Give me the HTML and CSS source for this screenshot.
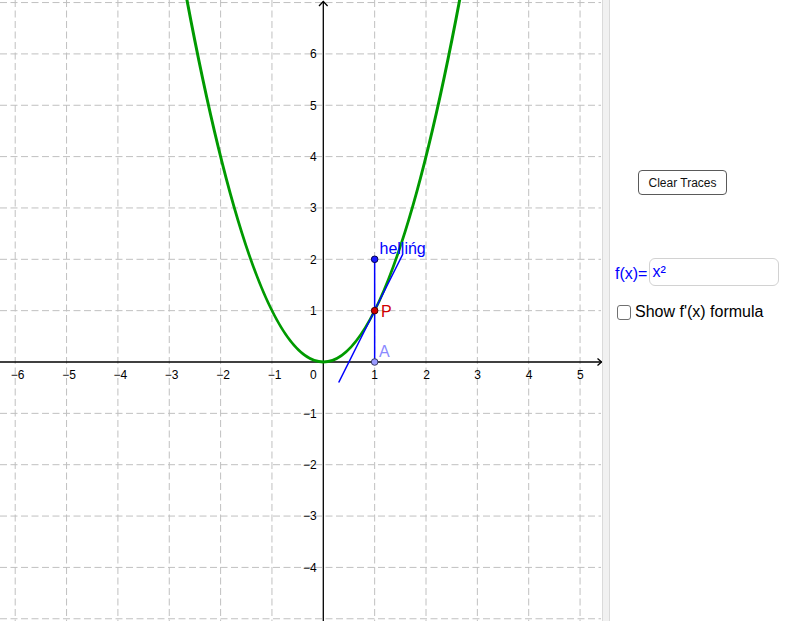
FILE: index.html
```html
<!DOCTYPE html>
<html lang="nl">
<head>
<meta charset="utf-8">
<title>Raaklijn</title>
<link rel="stylesheet" href="styles.css">
</head>
<body>
<div class="app">
  <div class="graph">
    <svg class="plot" width="602" height="621" viewBox="0 0 602 621" xmlns="http://www.w3.org/2000/svg">
      <g class="grid">
        <line x1="15.2" y1="0" x2="15.2" y2="621"/>
        <line x1="66.55" y1="0" x2="66.55" y2="621"/>
        <line x1="117.9" y1="0" x2="117.9" y2="621"/>
        <line x1="169.25" y1="0" x2="169.25" y2="621"/>
        <line x1="220.6" y1="0" x2="220.6" y2="621"/>
        <line x1="271.95" y1="0" x2="271.95" y2="621"/>
        <line x1="374.65" y1="0" x2="374.65" y2="621"/>
        <line x1="426" y1="0" x2="426" y2="621"/>
        <line x1="477.35" y1="0" x2="477.35" y2="621"/>
        <line x1="528.7" y1="0" x2="528.7" y2="621"/>
        <line x1="580.05" y1="0" x2="580.05" y2="621"/>
        <line x1="0" y1="2.55" x2="601" y2="2.55"/>
        <line x1="0" y1="53.9" x2="601" y2="53.9"/>
        <line x1="0" y1="105.25" x2="601" y2="105.25"/>
        <line x1="0" y1="156.6" x2="601" y2="156.6"/>
        <line x1="0" y1="207.95" x2="601" y2="207.95"/>
        <line x1="0" y1="259.3" x2="601" y2="259.3"/>
        <line x1="0" y1="310.65" x2="601" y2="310.65"/>
        <line x1="0" y1="413.35" x2="601" y2="413.35"/>
        <line x1="0" y1="464.7" x2="601" y2="464.7"/>
        <line x1="0" y1="516.05" x2="601" y2="516.05"/>
        <line x1="0" y1="567.4" x2="601" y2="567.4"/>
        <line x1="0" y1="618.75" x2="601" y2="618.75"/>
      </g>
      <g class="axes">
        <line x1="0" y1="362" x2="601.5" y2="362"/>
        <line x1="323.3" y1="621" x2="323.3" y2="1.5"/>
        <polyline points="597.5,358.5 601.5,362 597.5,365.5"/>
        <polyline points="319,6 323.3,1.5 327.6,6"/>
      </g>
      <g class="ticks">
        <text x="17.7" y="378.5" text-anchor="middle">−6</text>
        <text x="69" y="378.5" text-anchor="middle">−5</text>
        <text x="120.4" y="378.5" text-anchor="middle">−4</text>
        <text x="171.7" y="378.5" text-anchor="middle">−3</text>
        <text x="223.1" y="378.5" text-anchor="middle">−2</text>
        <text x="274.5" y="378.5" text-anchor="middle">−1</text>
        <text x="316.6" y="378.5" text-anchor="end">0</text>
        <text x="374.65" y="378.5" text-anchor="middle">1</text>
        <text x="426.5" y="378.5" text-anchor="middle">2</text>
        <text x="477.6" y="378.5" text-anchor="middle">3</text>
        <text x="529" y="378.5" text-anchor="middle">4</text>
        <text x="580.3" y="378.5" text-anchor="middle">5</text>
        <text x="316.6" y="58.2" text-anchor="end">6</text>
        <text x="316.6" y="109.5" text-anchor="end">5</text>
        <text x="316.6" y="160.9" text-anchor="end">4</text>
        <text x="316.6" y="212.2" text-anchor="end">3</text>
        <text x="316.6" y="263.6" text-anchor="end">2</text>
        <text x="316.6" y="314.9" text-anchor="end">1</text>
        <text x="316.6" y="417.6" text-anchor="end">−1</text>
        <text x="316.6" y="469" text-anchor="end">−2</text>
        <text x="316.6" y="520.3" text-anchor="end">−3</text>
        <text x="316.6" y="571.7" text-anchor="end">−4</text>
      </g>
      <path class="curve" d="M184.655,-12.34 Q323.3,736.34 461.945,-12.34"/>
      <line class="tangent" x1="338.7" y1="382.5" x2="402.9" y2="254"/>
      <line class="segment" x1="374.65" y1="259.3" x2="374.65" y2="362"/>
      <circle class="pt-top" cx="374.65" cy="259.3" r="3.3"/>
      <circle class="pt-p" cx="374.65" cy="310.65" r="3.3"/>
      <circle class="pt-a" cx="374.65" cy="362" r="3.3"/>
      <text class="lbl-helling" x="379.5" y="254">hellińg</text>
      <text class="lbl-p" x="381" y="316.5">P</text>
      <text class="lbl-a" x="379" y="356.5">A</text>
    </svg>
  </div>
  <div class="divider"></div>
  <div class="panel">
    <button class="btn" type="button">Clear Traces</button>
    <div class="fx-row">
      <span class="fx-label">f(x)=</span>
      <div class="fx-input">x²</div>
    </div>
    <label class="check-row">
      <span class="check-box"></span>
      <span class="check-text">Show f'(x) formula</span>
    </label>
  </div>
</div>
</body>
</html>
```
FILE: styles.css
```css
html, body {
  margin: 0;
  padding: 0;
  background: #ffffff;
}

body {
  font-family: "Liberation Sans", Arial, sans-serif;
}

.app {
  display: flex;
  width: 796px;
  height: 621px;
  overflow: hidden;
}

.graph {
  width: 602px;
  height: 621px;
  flex: none;
}

.plot {
  display: block;
}

.grid line {
  stroke: #c0c0c0;
  stroke-width: 1;
  stroke-dasharray: 7 3.5;
  fill: none;
}

.axes line,
.axes polyline {
  stroke: #000000;
  stroke-width: 1.3;
  fill: none;
}

.ticks text {
  font-family: "Liberation Sans", Arial, sans-serif;
  font-size: 12px;
  fill: #000000;
}

.curve {
  fill: none;
  stroke: #009a00;
  stroke-width: 3;
}

.tangent,
.segment {
  stroke: #0000ff;
  stroke-width: 1.5;
}

.pt-top {
  fill: #1a1aff;
  stroke: #00004d;
  stroke-width: 1;
}

.pt-p {
  fill: #d00000;
  stroke: #400000;
  stroke-width: 1;
}

.pt-a {
  fill: #9a9aff;
  stroke: #3a3a66;
  stroke-width: 1;
}

.lbl-helling,
.lbl-p,
.lbl-a {
  font-family: "Liberation Sans", Arial, sans-serif;
  font-size: 16px;
}

.lbl-helling {
  fill: #0000ff;
}

.lbl-p {
  fill: #d00000;
}

.lbl-a {
  fill: #8a8aff;
}

.divider {
  width: 6px;
  flex: none;
  background: #f1f1f1;
  border-left: 1px solid #dadada;
  border-right: 1px solid #dadada;
}

.panel {
  flex: 1;
  display: flex;
  flex-direction: column;
  align-items: flex-start;
}

.btn {
  margin: 170px 0 0 28px;
  width: 89px;
  height: 25px;
  padding: 0;
  background: #ffffff;
  border: 1.5px solid #5a5a5a;
  border-radius: 4px;
  font-family: "Liberation Sans", Arial, sans-serif;
  font-size: 12px;
  color: #111111;
}

.fx-row {
  margin: 63px 0 0 5px;
  display: flex;
  align-items: center;
  height: 28px;
}

.fx-label {
  font-size: 16px;
  color: #0000ff;
  margin-top: 3px;
}

.fx-input {
  box-sizing: border-box;
  width: 130px;
  height: 28px;
  margin-left: 2px;
  padding: 4px 0 0 2px;
  border: 1.5px solid #d2d2d2;
  border-radius: 6px;
  font-size: 16px;
  line-height: 18px;
  color: #0000ff;
}

.check-row {
  margin: 17px 0 0 7px;
  display: flex;
  align-items: center;
  gap: 4px;
}

.check-box {
  box-sizing: border-box;
  width: 14px;
  height: 15px;
  border: 1.5px solid #707070;
  border-radius: 3px;
  background: #ffffff;
}

.check-text {
  font-size: 16px;
  color: #000000;
}
```
